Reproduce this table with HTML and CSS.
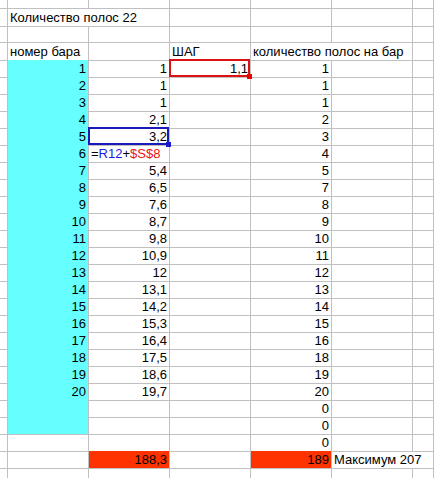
FILE: index.html
```html
<!DOCTYPE html>
<html lang="ru">
<head>
<meta charset="utf-8">
<title>Количество полос</title>
<link rel="stylesheet" href="styles.css">
</head>
<body>
<div class="sheet">
  <div class="row top"><div class="c"></div><div class="c"></div><div class="c"></div><div class="c"></div><div class="c"></div><div class="c"></div><div class="c"></div></div>
  <div class="row"><div class="c"></div><div class="c span2">Количество полос 22</div><div class="c"></div><div class="c"></div><div class="c"></div><div class="c"></div></div>
  <div class="row"><div class="c"></div><div class="c"></div><div class="c"></div><div class="c"></div><div class="c"></div><div class="c"></div><div class="c"></div></div>
  <div class="row"><div class="c"></div><div class="c">номер бара</div><div class="c"></div><div class="c">ШАГ</div><div class="c span2">количество полос на бар</div><div class="c"></div></div>

  <div class="row"><div class="c"></div><div class="c n cyan">1</div><div class="c n">1</div><div class="c n sel sel-red">1,1</div><div class="c n">1</div><div class="c"></div><div class="c"></div></div>
  <div class="row"><div class="c"></div><div class="c n cyan">2</div><div class="c n">1</div><div class="c"></div><div class="c n">1</div><div class="c"></div><div class="c"></div></div>
  <div class="row"><div class="c"></div><div class="c n cyan">3</div><div class="c n">1</div><div class="c"></div><div class="c n">1</div><div class="c"></div><div class="c"></div></div>
  <div class="row"><div class="c"></div><div class="c n cyan">4</div><div class="c n">2,1</div><div class="c"></div><div class="c n">2</div><div class="c"></div><div class="c"></div></div>
  <div class="row"><div class="c"></div><div class="c n cyan">5</div><div class="c n sel sel-blue">3,2</div><div class="c"></div><div class="c n">3</div><div class="c"></div><div class="c"></div></div>
  <div class="row"><div class="c"></div><div class="c n cyan">6</div><div class="c formula">=<span class="ref-blue">R12</span>+<span class="ref-red">$S$8</span></div><div class="c"></div><div class="c n">4</div><div class="c"></div><div class="c"></div></div>
  <div class="row"><div class="c"></div><div class="c n cyan">7</div><div class="c n">5,4</div><div class="c"></div><div class="c n">5</div><div class="c"></div><div class="c"></div></div>
  <div class="row"><div class="c"></div><div class="c n cyan">8</div><div class="c n">6,5</div><div class="c"></div><div class="c n">7</div><div class="c"></div><div class="c"></div></div>
  <div class="row"><div class="c"></div><div class="c n cyan">9</div><div class="c n">7,6</div><div class="c"></div><div class="c n">8</div><div class="c"></div><div class="c"></div></div>
  <div class="row"><div class="c"></div><div class="c n cyan">10</div><div class="c n">8,7</div><div class="c"></div><div class="c n">9</div><div class="c"></div><div class="c"></div></div>
  <div class="row"><div class="c"></div><div class="c n cyan">11</div><div class="c n">9,8</div><div class="c"></div><div class="c n">10</div><div class="c"></div><div class="c"></div></div>
  <div class="row"><div class="c"></div><div class="c n cyan">12</div><div class="c n">10,9</div><div class="c"></div><div class="c n">11</div><div class="c"></div><div class="c"></div></div>
  <div class="row"><div class="c"></div><div class="c n cyan">13</div><div class="c n">12</div><div class="c"></div><div class="c n">12</div><div class="c"></div><div class="c"></div></div>
  <div class="row"><div class="c"></div><div class="c n cyan">14</div><div class="c n">13,1</div><div class="c"></div><div class="c n">13</div><div class="c"></div><div class="c"></div></div>
  <div class="row"><div class="c"></div><div class="c n cyan">15</div><div class="c n">14,2</div><div class="c"></div><div class="c n">14</div><div class="c"></div><div class="c"></div></div>
  <div class="row"><div class="c"></div><div class="c n cyan">16</div><div class="c n">15,3</div><div class="c"></div><div class="c n">15</div><div class="c"></div><div class="c"></div></div>
  <div class="row"><div class="c"></div><div class="c n cyan">17</div><div class="c n">16,4</div><div class="c"></div><div class="c n">16</div><div class="c"></div><div class="c"></div></div>
  <div class="row"><div class="c"></div><div class="c n cyan">18</div><div class="c n">17,5</div><div class="c"></div><div class="c n">18</div><div class="c"></div><div class="c"></div></div>
  <div class="row"><div class="c"></div><div class="c n cyan">19</div><div class="c n">18,6</div><div class="c"></div><div class="c n">19</div><div class="c"></div><div class="c"></div></div>
  <div class="row"><div class="c"></div><div class="c n cyan">20</div><div class="c n">19,7</div><div class="c"></div><div class="c n">20</div><div class="c"></div><div class="c"></div></div>

  <div class="row"><div class="c"></div><div class="c cyan"></div><div class="c"></div><div class="c"></div><div class="c n">0</div><div class="c"></div><div class="c"></div></div>
  <div class="row"><div class="c"></div><div class="c cyan"></div><div class="c"></div><div class="c"></div><div class="c n">0</div><div class="c"></div><div class="c"></div></div>
  <div class="row"><div class="c"></div><div class="c"></div><div class="c"></div><div class="c"></div><div class="c n">0</div><div class="c"></div><div class="c"></div></div>
  <div class="row"><div class="c"></div><div class="c"></div><div class="c n red">188,3</div><div class="c"></div><div class="c n red">189</div><div class="c span2">Максимум 207</div></div>
  <div class="row"><div class="c"></div><div class="c"></div><div class="c"></div><div class="c"></div><div class="c"></div><div class="c"></div><div class="c"></div></div>
</div>
</body>
</html>
```

FILE: styles.css
```css
html, body {
  margin: 0;
  padding: 0;
  background: #ffffff;
}

.sheet {
  width: 434px;
  height: 478px;
  overflow: hidden;
  font-family: "Liberation Sans", Arial, sans-serif;
  font-size: 13px;
  color: #000000;
}

.row {
  display: grid;
  grid-template-columns: 8px 81px 81px 81px 81px 81px 1fr;
  height: 17px;
}

.row.top {
  height: 9px;
}

.c {
  box-sizing: border-box;
  border-right: 1px solid #c0c0c0;
  border-bottom: 1px solid #c0c0c0;
  padding: 0 2px 0 2px;
  line-height: 17px;
  white-space: nowrap;
  overflow: visible;
}

.n {
  text-align: right;
}

.span2 {
  grid-column: span 2;
}

.cyan {
  background: #66ffff;
}

.red {
  background: #ff3300;
}

.sel {
  position: relative;
}

.sel::before {
  content: "";
  position: absolute;
  left: -1px;
  top: -1px;
  right: 0;
  bottom: 0;
  border: 2px solid;
}

.sel::after {
  content: "";
  position: absolute;
  right: -2px;
  bottom: -2px;
  width: 5px;
  height: 5px;
}

.sel-red::before {
  border-color: #dd1111;
}

.sel-red::after {
  background: #ee0000;
}

.sel-blue::before {
  border-color: #1a1ab8;
}

.sel-blue::after {
  background: #1a1ad0;
}

.formula {
  color: #000000;
}

.ref-blue {
  color: #1a1ae0;
}

.ref-red {
  color: #ee1111;
}
```
